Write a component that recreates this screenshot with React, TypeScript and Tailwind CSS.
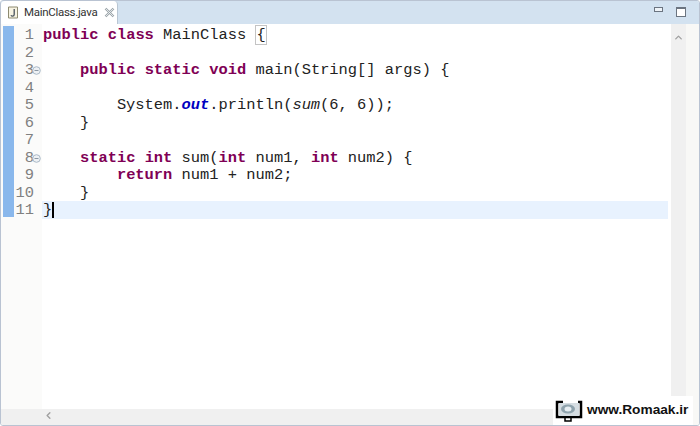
import { ChevronLeft, ChevronUp } from "lucide-react";
import type { ReactNode } from "react";

const K = ({ children }: { children: ReactNode }) => (
  <span className="font-bold text-[#7f0055]">{children}</span>
);

const lines: ReactNode[] = [
  <><K>public</K> <K>class</K> MainClass <span className="border border-[#c4c4c4]">{"{"}</span></>,
  "",
  <>    <K>public</K> <K>static</K> <K>void</K> main(String[] args) {"{"}</>,
  "",
  <>        System.<i className="font-bold text-[#0000c0]">out</i>.println(<i>sum</i>(6, 6));</>,
  <>    {"}"}</>,
  "",
  <>    <K>static</K> <K>int</K> sum(<K>int</K> num1, <K>int</K> num2) {"{"}</>,
  <>        <K>return</K> num1 + num2;</>,
  <>    {"}"}</>,
  <>{"}"}<span className="inline-block h-[16px] w-[2px] bg-black align-middle" /></>,
];

const folds = [3, 8];

function FoldIcon() {
  return (
    <svg width="9" height="9" viewBox="0 0 9 9" className="absolute left-[18px] top-[4px]">
      <circle cx="4.5" cy="4.5" r="3.8" fill="#eef1f4" stroke="#a9b8c6" />
      <path d="M2.5 4.5h4" stroke="#8b99a6" />
    </svg>
  );
}

function Logo() {
  return (
    <div className="absolute bottom-0 right-[6px] flex h-[29px] w-[140px] items-center gap-[4px] bg-white pl-[2px]">
      <svg width="28" height="22" viewBox="0 0 28 22">
        <path d="M8 2H2v15h24V2h-3" fill="none" stroke="#000" strokeWidth="2.5" />
        <rect x="4" y="3" width="20" height="13" fill="#d5dde2" />
        <ellipse cx="13" cy="9" rx="7" ry="4.5" fill="#8fa3ad" />
        <ellipse cx="13" cy="9" rx="3.5" ry="2.5" fill="#e7eef2" />
        <path d="M10 17h6v4h-6z" fill="none" stroke="#000" strokeWidth="1.5" />
      </svg>
      <span className="font-['Liberation_Sans',sans-serif] text-[13.7px] font-bold text-[#111]">www.Romaak.ir</span>
    </div>
  );
}

export default function App() {
  return (
    <div className="relative flex h-[426px] w-[700px] flex-col overflow-hidden rounded-[3px] border border-[#b9c3d2] bg-white">
      {/* tab bar */}
      <div className="flex h-[23px] shrink-0 items-stretch justify-between bg-[#d3e2f0]">
        <div className="flex w-[117px] items-center gap-[5px] rounded-t-[4px] border-r border-[#b9c6d3] bg-white pl-[6px]">
          <svg width="12" height="13" viewBox="0 0 12 13">
            <path d="M1.5 1h9v11h-9z" fill="#f7f3e2" stroke="#8d8a70" />
            <path d="M7.2 3v5.5q0 1.7-1.6 1.7-1.2 0-1.6-1" fill="none" stroke="#47525c" strokeWidth="1.3" />
          </svg>
          <span className="font-['Roboto',sans-serif] text-[11.5px] tracking-[-0.3px] text-[#333]">MainClass.java</span>
          <svg width="11" height="11" viewBox="0 0 11 11" className="ml-[2px]">
            <path d="M1.5 1.5l8 8M9.5 1.5l-8 8" stroke="#9aa3a8" strokeWidth="2.4" />
            <path d="M1.5 1.5l8 8M9.5 1.5l-8 8" stroke="#f4f6f7" strokeWidth="0.8" />
          </svg>
        </div>
        <div className="flex items-start gap-[13px] pr-[13px] pt-[6px]">
          <div className="h-[5px] w-[9px] border border-[#6b7480] bg-[#eef3f8]" />
          <div className="h-[10px] w-[10px] border border-[#6b7480] border-t-2 bg-white" />
        </div>
      </div>

      <div className="flex min-h-0 flex-1">
        <div className="flex min-w-0 flex-1 flex-col">
          <div className="flex min-h-0 flex-1">
            {/* annotation ruler + line numbers */}
            <div className="flex w-[41px] shrink-0 bg-[#fbfbfa]">
              <div className="ml-[2px] mt-[2px] h-[191px] w-[11px] bg-[#8ab8ec]" />
              <div className="flex flex-1 flex-col pt-[3px] font-['Liberation_Mono',monospace] text-[15.4px] text-[#808080]">
                {lines.map((_, i) => (
                  <div key={i} className="relative h-[17.5px] pr-[8px] text-right leading-[17.5px]">
                    {i + 1}
                    {folds.includes(i + 1) && <FoldIcon />}
                  </div>
                ))}
              </div>
            </div>

            {/* code */}
            <div className="min-w-0 flex-1 pt-[3px] font-['Liberation_Mono',monospace] text-[15.4px] text-[#222]">
              {lines.map((line, i) => (
                <div
                  key={i}
                  className={`whitespace-pre pl-[1px] leading-[17.5px] ${i === 10 ? "-mt-[1px] h-[18px] bg-[#e8f2fe] pt-[1px]" : "h-[17.5px]"}`}
                >
                  {line}
                </div>
              ))}
            </div>
            <div className="w-[3px] shrink-0" />
          </div>

          {/* horizontal scrollbar */}
          <div className="flex h-[16px] shrink-0 items-center bg-[#f0f0f0] pb-[3px] pl-[42px]">
            <ChevronLeft size={11} strokeWidth={3} className="text-[#a0a0a0]" />
          </div>
        </div>

        {/* vertical scrollbar */}
        <div className="flex w-[15px] shrink-0 justify-center bg-[#f0f0f0] pt-[8px]">
          <ChevronUp size={11} strokeWidth={3} className="text-[#a0a0a0]" />
        </div>
        <div className="w-[13px] shrink-0 bg-[#f8f8f6]" />
      </div>

      <Logo />
    </div>
  );
}
